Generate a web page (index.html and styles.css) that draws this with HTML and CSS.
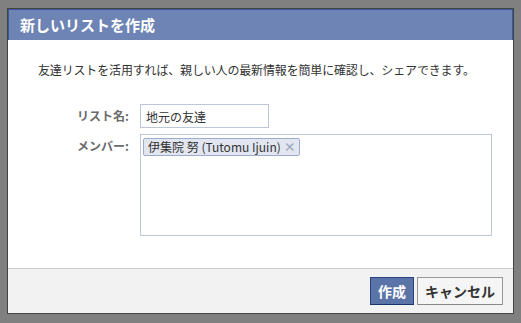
FILE: index.html
```html
<!DOCTYPE html>
<html lang="ja">
<head>
    <meta charset="UTF-8">
    <title>新しいリストを作成</title>
    <link rel="stylesheet" href="styles.css">
</head>
<body>
    <div class="dialog">
        <div class="dialogTitle">新しいリストを作成</div>
        <div class="dialogBody">
            <div class="intro">友達リストを活用すれば、親しい人の最新情報を簡単に確認し、シェアできます。</div>
            <form class="listForm" action="">
                <label for="listName">リスト名:</label>
                <input type="text" id="listName" class="nameInput" value="地元の友達">
                <label>メンバー:</label>
                <div class="members">
                    <span class="token">伊集院 努 (Tutomu Ijuin)<span class="remove">×</span></span>
                </div>
            </form>
        </div>
        <div class="dialogFooter">
            <button class="btn btnPrimary">作成</button>
            <button class="btn">キャンセル</button>
        </div>
    </div>
</body>
</html>
```

FILE: styles.css
```css
body {
    margin: 0;
    background-color: #808080;
    font-family: "Noto Sans CJK JP", sans-serif;
    font-size: 12px;
    color: #333;
}

.dialog {
    margin: 8px 0 0 7px;
    width: 505px;
    border: 1px solid #444;
    background-color: white;
}

.dialogTitle {
    background-color: #6d84b4;
    border: 1px solid #3b5998;
    border-bottom: none;
    color: white;
    font-size: 15px;
    font-weight: bold;
    height: 30px;
    line-height: 30px;
    padding-left: 11px;
}

.dialogBody {
    height: 228px;
    padding-top: 22px;
    box-sizing: border-box;
}

.intro {
    padding-left: 30px;
    margin-bottom: 26px;
    line-height: 16px;
    letter-spacing: -0.16px;
}

.listForm {
    display: grid;
    grid-template-columns: 121px 352px;
    column-gap: 11px;
    row-gap: 6px;
}

label {
    text-align: right;
    font-weight: bold;
    color: #6a6a6a;
    font-size: 12px;
    padding-top: 4px;
    line-height: 16px;
}

.nameInput {
    width: 129px;
    height: 24px;
    box-sizing: border-box;
    border: 1px solid #bdc7d8;
    padding: 0 5px;
    font-family: inherit;
    font-size: 12px;
    color: #333;
}

.members {
    height: 102px;
    box-sizing: border-box;
    border: 1px solid #bdc7d8;
    padding: 3px 2px;
}

.token {
    display: inline-block;
    height: 18px;
    line-height: 16px;
    box-sizing: border-box;
    background-color: #e2e6f0;
    border: 1px solid #9daccc;
    border-radius: 2px;
    padding: 0 3px 0 4px;
    color: #333;
}

.remove {
    color: #9aa4ba;
    font-weight: bold;
    margin-left: 3px;
}

.dialogFooter {
    background-color: #f2f2f2;
    border-top: 1px solid #ccc;
    height: 45px;
    box-sizing: border-box;
    padding: 8px 10px 0 0;
    display: flex;
    justify-content: flex-end;
    gap: 3px;
}

.btn {
    height: 28px;
    padding: 0 7px;
    font-family: inherit;
    font-size: 14px;
    font-weight: bold;
    color: #333;
    background-color: #f5f5f5;
    border: 1px solid #999;
    border-bottom-color: #888;
}

.btnPrimary {
    background-color: #5b74a8;
    border-color: #29447e #29447e #1a356e;
    color: white;
}
```
